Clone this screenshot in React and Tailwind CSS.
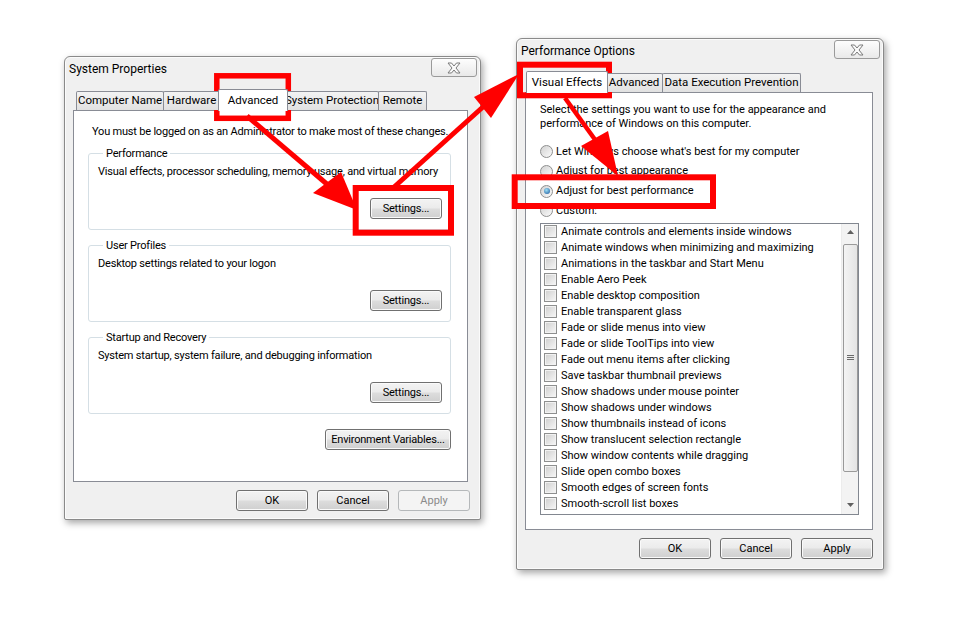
import React from 'react';

const font = { fontFamily: 'Roboto, "Liberation Sans", sans-serif' };

const effects = [
    'Animate controls and elements inside windows',
    'Animate windows when minimizing and maximizing',
    'Animations in the taskbar and Start Menu',
    'Enable Aero Peek',
    'Enable desktop composition',
    'Enable transparent glass',
    'Fade or slide menus into view',
    'Fade or slide ToolTips into view',
    'Fade out menu items after clicking',
    'Save taskbar thumbnail previews',
    'Show shadows under mouse pointer',
    'Show shadows under windows',
    'Show thumbnails instead of icons',
    'Show translucent selection rectangle',
    'Show window contents while dragging',
    'Slide open combo boxes',
    'Smooth edges of screen fonts',
    'Smooth-scroll list boxes',
];

function CloseButton() {
    return (
        <div className="w-[46px] h-[19px] rounded-[3px] border border-[#9a9a9a] bg-[linear-gradient(#fdfdfd,#e9e9e9)] flex items-center justify-center">
            <svg width="14" height="12" viewBox="0 0 14 12">
                <path d="M1 1h3.5L7 4l2.5-3H13L9 6l4 5H9.5L7 8l-2.5 3H1l4-5z" fill="#fafafa" stroke="#7b7b7b" strokeWidth="1" strokeLinejoin="round" />
            </svg>
        </div>
    );
}

function Button({ children, w = 'w-[72px]', h = 'h-[21px]', disabled }) {
    const cls = disabled
        ? 'border-[#b5b8ba] bg-[#f4f4f4] text-[#8a8a8a]'
        : 'border-[#707070] bg-[linear-gradient(#f3f3f3_0%,#ebebeb_48%,#dddddd_52%,#cfcfcf_100%)] text-black shadow-[inset_0_0_0_1px_#fafafa]';
    return (
        <div className={`${w} ${h} rounded-[3px] border ${cls} flex items-center justify-center text-[11px] leading-none whitespace-nowrap`}>
            {children}
        </div>
    );
}

function Tabs({ tabs }) {
    return (
        <div className="flex items-end h-[22px] pl-[3px] relative z-10">
            {tabs.map((t) =>
                t.selected ? (
                    <div key={t.label} className={`${t.w} h-[22px] -mx-[2px] -mb-px bg-white border border-b-0 border-[#898c95] rounded-t-[2px] flex items-start pt-[3px] justify-center text-[11.5px] leading-[14px] whitespace-nowrap relative z-10`}>
                        {t.label}
                    </div>
                ) : (
                    <div key={t.label} className={`${t.w} h-[19px] bg-[linear-gradient(#f3f3f3,#e1e1e1)] border border-b-0 border-[#898c95] -ml-px first:ml-0 rounded-t-[2px] flex items-center justify-center text-[11.5px] leading-none whitespace-nowrap`}>
                        {t.label}
                    </div>
                )
            )}
        </div>
    );
}

function Dialog({ title, className, tabs, children, buttons, panelCls }) {
    return (
        <div className={`absolute ${className} border border-[#8a8a8a] rounded-t-[6px] rounded-b-[2px] bg-[#f0f0f0] shadow-[2px_3px_7px_rgba(0,0,0,0.35),inset_0_0_0_1px_#fbfbfb] flex flex-col px-[8px]`} style={font}>
            <div className="h-[26px] flex items-center justify-between -mr-[5px] -ml-[5px]">
                <span className="text-[12px] pl-[1px] pb-[3px] whitespace-nowrap">{title}</span>
                <div className="self-start mt-px">
                    <CloseButton />
                </div>
            </div>
            <div className="mt-[5px]">
                <Tabs tabs={tabs} />
                <div className={`${panelCls} bg-white border border-[#898c95]`}>{children}</div>
            </div>
            <div className="flex justify-end gap-[9px] mt-[8px] pr-[2px]">
                {buttons}
            </div>
        </div>
    );
}

function Group({ label, desc, className }) {
    return (
        <fieldset className={`w-[363px] border border-[#d5dfe5] rounded-[3px] px-[9px] pb-[10px] ${className}`}>
            <legend className="ml-[5px] px-[3px] text-[11px] leading-[15px] whitespace-nowrap">{label}</legend>
            <div className="text-[11px] leading-[15px] mt-[3px] whitespace-nowrap">{desc}</div>
            <div className="flex justify-end mt-[19px] -mr-[1px]">
                <Button w="w-[72px]">Settings...</Button>
            </div>
        </fieldset>
    );
}

function SystemProperties() {
    return (
        <Dialog
            title="System Properties"
            className="left-[64px] top-[56px] w-[417px] h-[464px]"
            panelCls="h-[372px] w-[395px]"
            tabs={[
                { label: 'Computer Name', w: 'w-[88px]' },
                { label: 'Hardware', w: 'w-[57px]' },
                { label: 'Advanced', w: 'w-[70px]', selected: true },
                { label: 'System Protection', w: 'w-[94px]' },
                { label: 'Remote', w: 'w-[49px]' },
            ]}
            buttons={
                <>
                    <Button>OK</Button>
                    <Button>Cancel</Button>
                    <Button disabled>Apply</Button>
                </>
            }
        >
            <div className="pt-[13px] pl-[14px] tracking-[-0.2px]">
                <div className="text-[11px] leading-[15px] pl-[4px] whitespace-nowrap">You must be logged on as an Administrator to make most of these changes.</div>
                <Group className="mt-[7px]" label="Performance" desc="Visual effects, processor scheduling, memory usage, and virtual memory" />
                <Group className="mt-[8px]" label="User Profiles" desc="Desktop settings related to your logon" />
                <Group className="mt-[8px]" label="Startup and Recovery" desc="System startup, system failure, and debugging information" />
                <div className="w-[363px] flex justify-end mt-[15px]">
                    <Button w="w-[126px]">Environment Variables...</Button>
                </div>
            </div>
        </Dialog>
    );
}

function Radio({ checked, label }) {
    return (
        <div className="h-[19.7px] flex items-center">
            <div className="w-[13px] h-[13px] rounded-full border border-[#8e8f8f] bg-[linear-gradient(135deg,#d2d2d2,#fbfbfb)] flex items-center justify-center">
                {checked && <div className="w-[6px] h-[6px] rounded-full bg-[radial-gradient(circle_at_40%_35%,#9fe0f6,#17549a)]" />}
            </div>
            <span className="ml-[3px] text-[11px] whitespace-nowrap">{label}</span>
        </div>
    );
}

function Checkbox() {
    return <div className="w-[13px] h-[13px] shrink-0 border border-[#8e8f8f] bg-[linear-gradient(135deg,#cfcfcf,#f7f7f7)] shadow-[inset_0_0_0_1px_#f2f2f2]" />;
}

function Scrollbar() {
    return (
        <div className="w-[17px] bg-[#f3f3f3] border-l border-[#ececec] flex flex-col items-center">
            <div className="h-[17px] flex items-center justify-center">
                <svg width="7" height="4" viewBox="0 0 7 4"><path d="M0 4L3.5 0L7 4z" fill="#606060" /></svg>
            </div>
            <div className="w-[15px] h-[228px] mt-[3px] rounded-[2px] border border-[#9a9a9a] bg-[linear-gradient(90deg,#f4f4f4,#e4e4e4)] flex items-center justify-center">
                <svg width="7" height="7" viewBox="0 0 7 7">
                    <path d="M0 1.5h7M0 3.5h7M0 5.5h7" stroke="#6a6a6a" strokeWidth="1" />
                </svg>
            </div>
            <div className="flex-1" />
            <div className="h-[17px] flex items-center justify-center">
                <svg width="7" height="4" viewBox="0 0 7 4"><path d="M0 0L3.5 4L7 0z" fill="#606060" /></svg>
            </div>
        </div>
    );
}

function PerformanceOptions() {
    return (
        <Dialog
            title="Performance Options"
            className="left-[516px] top-[38px] w-[368px] h-[532px]"
            panelCls="h-[438px] w-[348px]"
            tabs={[
                { label: 'Visual Effects', w: 'w-[82px]', selected: true },
                { label: 'Advanced', w: 'w-[58px]' },
                { label: 'Data Execution Prevention', w: 'w-[139px]' },
            ]}
            buttons={
                <>
                    <Button>OK</Button>
                    <Button>Cancel</Button>
                    <Button>Apply</Button>
                </>
            }
        >
            <div className="pt-[10px] pl-[14px]">
                <div className="text-[11px] leading-[14px] whitespace-nowrap">
                    Select the settings you want to use for the appearance and
                    <br />
                    performance of Windows on this computer.
                </div>
                <div className="mt-[11px]">
                    <Radio label="Let Windows choose what's best for my computer" />
                    <Radio label="Adjust for best appearance" />
                    <Radio checked label="Adjust for best performance" />
                    <Radio label="Custom:" />
                </div>
                <div className="mt-[2px] w-[319px] h-[292px] border border-[#828790] bg-white flex">
                    <div className="flex-1 pl-[3px]">
                        {effects.map((e) => (
                            <div key={e} className="h-[16px] flex items-center gap-[4px] text-[11px]">
                                <Checkbox />
                                <span className="whitespace-nowrap">{e}</span>
                            </div>
                        ))}
                    </div>
                    <Scrollbar />
                </div>
            </div>
        </Dialog>
    );
}

function Annotations() {
    const red = '#ff0000';
    return (
        <svg className="absolute inset-0 pointer-events-none" width="954" height="623" viewBox="0 0 954 623">
            <rect x="216.8" y="75.8" width="71.5" height="42.5" fill="none" stroke={red} strokeWidth="5.5" />
            <rect x="355.7" y="188" width="95.3" height="44.7" fill="none" stroke={red} strokeWidth="6" />
            <rect x="520" y="64.7" width="89" height="30.6" fill="none" stroke={red} strokeWidth="6" />
            <rect x="514.7" y="177.3" width="198.3" height="28.7" fill="none" stroke={red} strokeWidth="6" />

            <line x1="247" y1="116" x2="328" y2="185" stroke={red} strokeWidth="5" />
            <polygon points="313,193 341,172 357,210" fill={red} />

            <line x1="393" y1="188" x2="484" y2="106" stroke={red} strokeWidth="5" />
            <polygon points="474,97 491,118 519,74" fill={red} />

            <line x1="565" y1="98" x2="596" y2="141" stroke={red} strokeWidth="4.5" />
            <polygon points="581,146 608,131 618,176" fill={red} />
        </svg>
    );
}

export default function App() {
    return (
        <div className="relative w-[954px] h-[623px] bg-white overflow-hidden">
            <SystemProperties />
            <PerformanceOptions />
            <Annotations />
        </div>
    );
}
